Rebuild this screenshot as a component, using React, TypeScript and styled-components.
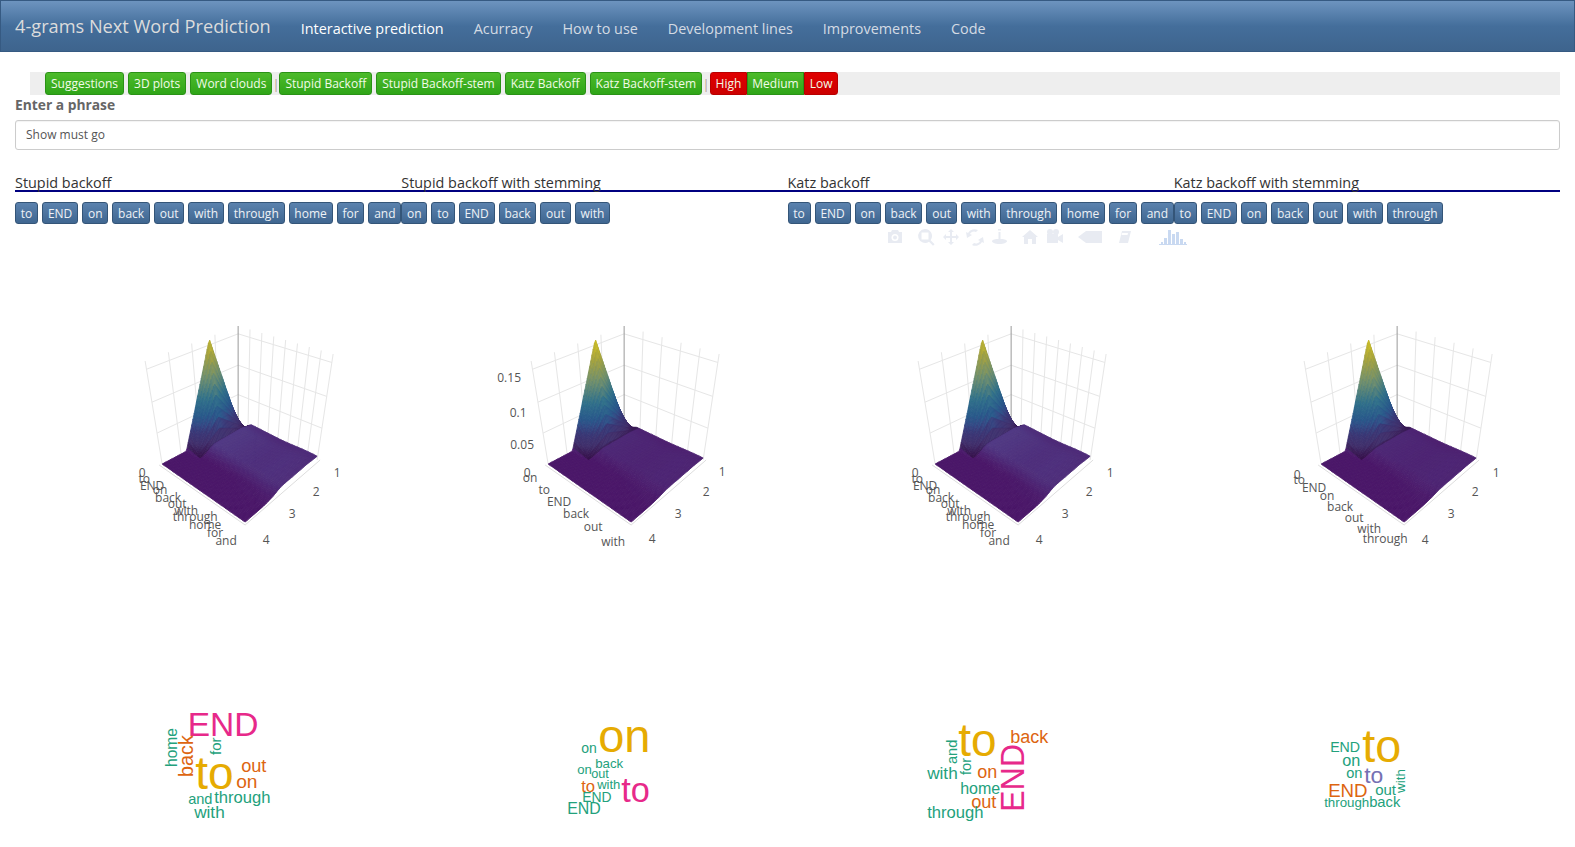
import React, { useMemo } from "react";
import styled, { createGlobalStyle } from "styled-components";

const Global = createGlobalStyle`
  html, body { margin: 0; padding: 0; background: #fff; overflow: hidden; }
  body { font-family: "Open Sans", "Liberation Sans", sans-serif; font-size: 14px; color: #666; }
`;

const Navbar = styled.nav`
  display: flex; align-items: flex-start; height: 50px; box-sizing: content-box;
  background: linear-gradient(#6d94bf, #446e9b 50%, #3e648d);
  border: 1px solid #365a82;
`;
const Brand = styled.div`
  font-size: 18.2px; line-height: 20px; color: #dcdcdc; padding: 15px 15px 0 14px; white-space: nowrap;
`;
const NavLink = styled.a<{ $active?: boolean }>`
  font-size: 14.4px; line-height: 20px; padding: 18px 15px 0; white-space: nowrap;
  color: ${(p) => (p.$active ? "#fff" : "#d4dbe4")};
`;

const Content = styled.main`padding: 20px 15px 0;`;
const Toolbar = styled.div`
  display: flex; align-items: center; height: 23px; margin-left: 15px; padding-left: 15px; background: #eee;
`;
const ToolGroup = styled.div`display: flex; gap: 4px;`;
const Sep = styled.span<{ $w: number }>`
  width: ${(p) => p.$w}px; text-align: center; font-size: 13px; line-height: 22px; color: #b09a90;
`;
const Joined = styled.div`display: flex;`;
const ToolButton = styled.button<{ $red?: boolean; $joined?: boolean }>`
  font: 12px/20px "Open Sans", sans-serif; height: 23px; padding: 0 ${(p) => (p.$joined ? "4.5px" : "5px")}; margin: 0; white-space: nowrap;
  color: #f2fbe8; border-radius: ${(p) => (p.$joined ? "0" : "3px")};
  border: 1px solid ${(p) => (p.$red ? "#b80000" : "#2a9216")};
  background: ${(p) => (p.$red ? "linear-gradient(#e00000,#cc0000)" : "linear-gradient(#4dbb2b,#2fa518)")};
  &:first-child { border-radius: ${(p) => (p.$joined ? "3px 0 0 3px" : "3px")}; }
  &:last-child { border-radius: ${(p) => (p.$joined ? "0 3px 3px 0" : "3px")}; }
`;
const Label = styled.label`
  display: block; font-weight: 700; font-size: 13.8px; line-height: 20px; color: #666; margin-top: 0;
`;
const Input = styled.input`
  display: block; box-sizing: border-box; width: 100%; height: 30px; margin-top: 5px; padding: 0 10px 2px;
  font: 12px "Open Sans", sans-serif; color: #555; border: 1px solid #ccc; border-radius: 3px;
  background: #fff; box-shadow: inset 0 1px 1px rgba(0,0,0,.05);
`;
const Columns = styled.div`display: grid; grid-template-columns: repeat(4, 1fr);`;
const TitleRow = styled(Columns)`margin-top: 23px; height: 17px; border-bottom: 2px solid #000080;`;
const Title = styled.div`font-size: 14.4px; line-height: 20px; color: #333; white-space: nowrap;`;
const ChipRow = styled(Columns)`margin-top: 10px; height: 22px;`;
const Chips = styled.div`display: flex; gap: 4px; white-space: nowrap;`;
const Chip = styled.button`
  font: 12px/18px "Open Sans", sans-serif; height: 22px; padding: 1px 4.8px 0; margin: 0; color: #eef2f7;
  border: 1px solid #345578; border-radius: 3px; background: linear-gradient(#5b82ae, #3f6690);
  flex: none;
`;
const PlotRow = styled(Columns)`position: relative; margin-top: 3px; height: 440px;`;
const PlotSvg = styled.svg`display: block; width: 100%; height: 440px; overflow: visible;`;
const CloudSvg = styled.svg`display: block; width: 100%; height: 180px; overflow: visible;`;
const Modebar = styled.svg`position: absolute; left: 855px; top: -1px; width: 335px; height: 24px; overflow: visible;`;

const STOPS: [number, number[]][] = [
  [0, [74, 23, 104]], [0.07, [80, 58, 132]], [0.16, [62, 60, 128]], [0.28, [40, 88, 138]], [0.42, [48, 112, 138]],
  [0.6, [110, 142, 110]], [0.8, [165, 162, 62]], [1, [214, 197, 31]],
];
function color(v: number, dark: number) {
  const z = Math.max(0, Math.min(1, v));
  for (let i = 1; i < STOPS.length; i++) {
    if (z <= STOPS[i][0]) {
      const [a, ca] = STOPS[i - 1];
      const [b, cb] = STOPS[i];
      const k = (z - a) / (b - a);
      return `rgb(${ca.map((c, j) => Math.round((c + (cb[j] - c) * k) * dark)).join(",")})`;
    }
  }
  return "rgb(214,197,31)";
}
const L = [147, 463], B = [230, 521], R = [302, 459], K = [223, 423];
const LT = [130, 360], KT = [223, 325], RT = [318, 353];
const smooth = (a: number, b: number, x: number) => {
  const k = Math.max(0, Math.min(1, (x - a) / (b - a)));
  return k * k * (3 - 2 * k);
};
function peak(s: number, t: number, v: number) {
  const apex = 0.62;
  const ridge = t < apex ? Math.max(0, (t - 0.32) / (apex - 0.32)) : Math.max(0, (1 - t) / (1 - apex));
  const fall = Math.max(0, 1 - s / (v ? 0.18 : 0.15));
  return ridge * fall;
}
function height(s: number, t: number, v: number) {
  const plateau = (v ? 0.04 : 0.085) * smooth(0.34, 0.54, t) * smooth(0.07, 0.18, s) * (1 - s * 0.7) * (1 - 0.3 * smooth(0.85, 1, t));
  const side = (v ? 0.012 : 0.02) * smooth(0.2, 0.5, t) * smooth(0.5, 0.95, s);
  return Math.max(peak(s, t, v), plateau + side);
}
function project(s: number, t: number, h: number) {
  const x0 = L[0] + (B[0] - L[0]) * s, y0 = L[1] + (B[1] - L[1]) * s;
  const x1 = K[0] + (R[0] - K[0]) * s, y1 = K[1] + (R[1] - K[1]) * s;
  return [x0 + (x1 - x0) * t, y0 + (y1 - y0) * t - h * 100];
}
function surface(v: number) {
  const N = 64;
  const out: { d: string; c: string }[] = [];
  for (let j = N - 1; j >= 0; j--) {
    for (let i = 0; i < N; i++) {
      const s0 = i / N, s1 = (i + 1) / N, t0 = j / N, t1 = (j + 1) / N;
      const hs = [height(s0, t0, v), height(s1, t0, v), height(s1, t1, v), height(s0, t1, v)];
      const pts = [project(s0, t0, hs[0]), project(s1, t0, hs[1]), project(s1, t1, hs[2]), project(s0, t1, hs[3])];
      const avg = (hs[0] + hs[1] + hs[2] + hs[3]) / 4;
      const foot = peak(s0, t0, v) > 0 && avg < 0.22 && s0 < 0.2 ? 0.72 + avg * 1.2 : 1;
      out.push({ d: "M" + pts.map((p) => `${p[0].toFixed(1)} ${p[1].toFixed(1)}`).join("L") + "Z", c: color(avg * (v ? 1 : 0.94), foot) });
    }
  }
  return out;
}
const lerp = (a: number[], b: number[], k: number) => [a[0] + (b[0] - a[0]) * k, a[1] + (b[1] - a[1]) * k];

type Tick = [string, number, number];
const NUM1: Tick[] = [["1", 322, 471], ["2", 301, 490], ["3", 277, 512], ["4", 251, 538]];
const P1: Tick[] = [["0", 127, 471], ["to", 129, 477], ["END", 137, 484], ["on", 145, 488], ["back", 153, 496], ["out", 162, 502], ["with", 171, 509], ["through", 180, 515], ["home", 190, 523], ["for", 200, 531], ["and", 211, 539], ...NUM1];
const P2: Tick[] = [["0.15", 108, 376], ["0.1", 117, 411], ["0.05", 121, 443], ["0", 126, 471], ["on", 129, 476], ["to", 143, 488], ["END", 158, 500], ["back", 175, 512], ["out", 192, 525], ["with", 212, 540], ["1", 321, 470], ["2", 305, 490], ["3", 277, 512], ["4", 251, 537]];
const P4: Tick[] = [["0", 123, 473], ["to", 125, 478], ["END", 140, 486], ["on", 153, 494], ["back", 166, 505], ["out", 180, 516], ["with", 195, 527], ["through", 211, 537], ...NUM1];

const GridLine = styled.line`stroke: #e6e6e6; stroke-width: 1;`;
const TickText = styled.text`font: 12px "Open Sans", sans-serif; fill: #555; text-anchor: middle; dominant-baseline: central;`;

function Plot({ ticks, v }: { ticks: Tick[]; v: number }) {
  const polys = useMemo(() => surface(v), [v]);
  const wall: number[][][] = [];
  for (const z of [0.3, 0.6, 0.92]) {
    wall.push([lerp(L, LT, z), lerp(K, KT, z)], [lerp(K, KT, z), lerp(R, RT, z)]);
  }
  for (let i = 0; i <= 3; i++) {
    const k = i / 4;
    wall.push([lerp(L, K, k), lerp(LT, KT, k)]);
  }
  const right = v ? 5 : 8;
  for (let i = 1; i <= right; i++) {
    const k = i / right;
    wall.push([lerp(K, R, k), lerp(KT, RT, k)]);
  }
  return (
    <PlotSvg viewBox="0 226 386 440">
      {wall.map((l, i) => <GridLine key={i} x1={l[0][0]} y1={l[0][1]} x2={l[1][0]} y2={l[1][1]} />)}
      <line x1={K[0]} y1={KT[1]} x2={K[0]} y2={K[1]} stroke="#999" />
      <polyline points={`${L[0] - 3},${L[1] + 1} ${B[0]},${B[1] + 3} ${R[0] + 3},${R[1]}`} fill="none" stroke="#ddd" />
      {polys.map((p, i) => <path key={i} d={p.d} fill={p.c} stroke={p.c} strokeWidth={0.8} />)}
      {ticks.map((t, i) => <TickText key={i} x={t[1]} y={t[2]}>{t[0]}</TickText>)}
    </PlotSvg>
  );
}

const Y = "#e6ab02", O = "#dd6510", G = "#23a17c", P = "#e7298a", V = "#7570b3";
type W = [string, number, number, number, string, number?];
const CLOUDS: W[][] = [
  [["END", 187.5, 734.5, 33.5, P], ["to", 195, 788, 46, Y], ["back", 192.5, 776, 19.8, O, 1], ["home", 176.5, 766, 15.6, G, 1], ["for", 220.5, 754, 15, G, 1], ["out", 241, 770.5, 18.2, O], ["on", 236, 786.5, 19.2, O], ["and", 188, 802.5, 14.6, G], ["through", 214, 801.5, 16.6, G], ["with", 194, 816.5, 17.2, G]],
  [["on", 598, 750.5, 47, Y], ["on", 581, 751.5, 14, G], ["back", 595, 766.5, 13.3, G], ["on", 577, 772.5, 13.1, G], ["out", 591, 776.5, 12.7, G], ["to", 581, 790.5, 16.6, O], ["with", 597, 787.5, 13, G], ["to", 621, 800.5, 34.3, P], ["END", 582, 800.5, 13.9, G], ["END", 567, 812.5, 15.9, G]],
  [["to", 958, 754.5, 46, Y], ["back", 1010, 741.5, 18, O], ["and", 956.5, 763, 14.6, G, 1], ["for", 970.5, 774, 14.6, G, 1], ["with", 927, 777.5, 17.2, G], ["on", 977, 776.5, 18, O], ["home", 960, 792.5, 16, G], ["out", 971, 806.5, 18.2, O], ["through", 927, 816.5, 16.6, G], ["END", 1023.5, 811, 32.3, P, 1]],
  [["to", 1362, 760.5, 46.8, Y], ["END", 1330, 750.5, 14.2, G], ["on", 1342, 764.5, 16.2, G], ["on", 1346, 776.5, 14.6, G], ["to", 1364, 781.5, 22.9, V], ["with", 1404.5, 792, 13.5, G, 1], ["out", 1375, 793.5, 15, G], ["END", 1328, 795.5, 18.7, O], ["through", 1324, 805.5, 13.3, G], ["back", 1369, 805.5, 14.8, G]],
];
const CloudWord = styled.text`font-family: "Liberation Sans", Arial, sans-serif;`;
const LEFTS = [15, 401, 788, 1174];

function Cloud({ index }: { index: number }) {
  return (
    <CloudSvg viewBox={`${LEFTS[index]} 666 386 180`}>
      {CLOUDS[index].map((w, i) => (
        <CloudWord key={i} x={w[1]} y={w[2]} fontSize={w[3]} fill={w[4]} transform={w[5] ? `rotate(-90 ${w[1]} ${w[2]})` : undefined}>{w[0]}</CloudWord>
      ))}
    </CloudSvg>
  );
}

const I = "#e8ebf2";
function ModeIcons() {
  return (
    <Modebar viewBox="870 226 335 24">
      <g fill={I}>
        <path d="M888 232h3l1-2h6l1 2h3v11h-14z" /><circle cx="895" cy="237.500" r="3.500" fill="#fff" /><circle cx="895" cy="237.500" r="2" />
        <path d="M925 229a7 7 0 0 1 5.600 11.200l4 4-1.600 1.600-4-4A7 7 0 1 1 925 229zm-3.500 3.500v7h7v-7z" />
        <path d="M951 229l3 3h-2v4h4v-2l3 3-3 3v-2h-4v4h2l-3 3-3-3h2v-4h-4v2l-3-3 3-3v2h4v-4h-2z" />
        <path d="M978 230a7.500 7.500 0 0 0-10 3l-2-1 1 6 5-3-2-1a4.500 4.500 0 0 1 6-2zM972 245a7.500 7.500 0 0 0 10-3l2 1-1-6-5 3 2 1a4.500 4.500 0 0 1-6 2z" />
        <path d="M998 229h3v1.500h-3zM998.500 232h2v7c3 0 6 .5 6.500 2 .4 1.500-3 3-7.500 3s-7.900-1.500-7.500-3c.5-1.500 3.500-2 6.500-2z" />
        <path d="M1030 230l8 7h-2v7h-4v-5h-4v5h-4v-7h-2z" />
        <path d="M1047 234h11v9h-11z" /><circle cx="1050" cy="232" r="3" /><circle cx="1056" cy="232" r="3" /><path d="M1058 237l5-3v9l-5-3z" />
        <path d="M1078 237l8-6h16v12h-16z" />
        <path d="M1122 231h9l-3 12h-9z" /><path d="M1122 233h6l-.5 2h-6z" fill="#fff" />
      </g>
      <path d="M1161 244h2v-2h-2zM1164 244h3v-6h-3zM1168 244h3v-14h-3zM1172 244h3v-10h-3zM1176 244h3v-12h-3zM1180 244h3v-5h-3zM1184 244h2v-2h-2zM1159 244h28v1h-28z" fill="#c9d9f1" />
    </Modebar>
  );
}

const WORDS = [
  ["to", "END", "on", "back", "out", "with", "through", "home", "for", "and"],
  ["on", "to", "END", "back", "out", "with"],
  ["to", "END", "on", "back", "out", "with", "through", "home", "for", "and"],
  ["to", "END", "on", "back", "out", "with", "through"],
];
const TITLES = ["Stupid backoff", "Stupid backoff with stemming", "Katz backoff", "Katz backoff with stemming"];
const NAV = ["Acurracy", "How to use", "Development lines", "Improvements", "Code"];

export default function App() {
  return (
    <>
      <Global />
      <Navbar>
        <Brand>4-grams Next Word Prediction</Brand>
        <NavLink $active>Interactive prediction</NavLink>
        {NAV.map((n) => <NavLink key={n}>{n}</NavLink>)}
      </Navbar>
      <Content>
        <Toolbar>
          <ToolGroup>
            {["Suggestions", "3D plots", "Word clouds"].map((t) => <ToolButton key={t}>{t}</ToolButton>)}
          </ToolGroup>
          <Sep $w={7}>|</Sep>
          <ToolGroup>
            {["Stupid Backoff", "Stupid Backoff-stem", "Katz Backoff", "Katz Backoff-stem"].map((t) => <ToolButton key={t}>{t}</ToolButton>)}
          </ToolGroup>
          <Sep $w={8}>|</Sep>
          <Joined>
            <ToolButton $joined $red>High</ToolButton>
            <ToolButton $joined>Medium</ToolButton>
            <ToolButton $joined $red>Low</ToolButton>
          </Joined>
        </Toolbar>
        <Label>Enter a phrase</Label>
        <Input readOnly value="Show must go" />
        <TitleRow>{TITLES.map((t) => <Title key={t}>{t}</Title>)}</TitleRow>
        <ChipRow>
          {WORDS.map((w, i) => (
            <Chips key={i}>{w.map((x) => <Chip key={x}>{x}</Chip>)}</Chips>
          ))}
        </ChipRow>
        <PlotRow>
          <Plot ticks={P1} v={0} />
          <Plot ticks={P2} v={1} />
          <Plot ticks={P1} v={0} />
          <Plot ticks={P4} v={1} />
          <ModeIcons />
        </PlotRow>
        <Columns>
          {[0, 1, 2, 3].map((i) => <Cloud key={i} index={i} />)}
        </Columns>
      </Content>
    </>
  );
}
